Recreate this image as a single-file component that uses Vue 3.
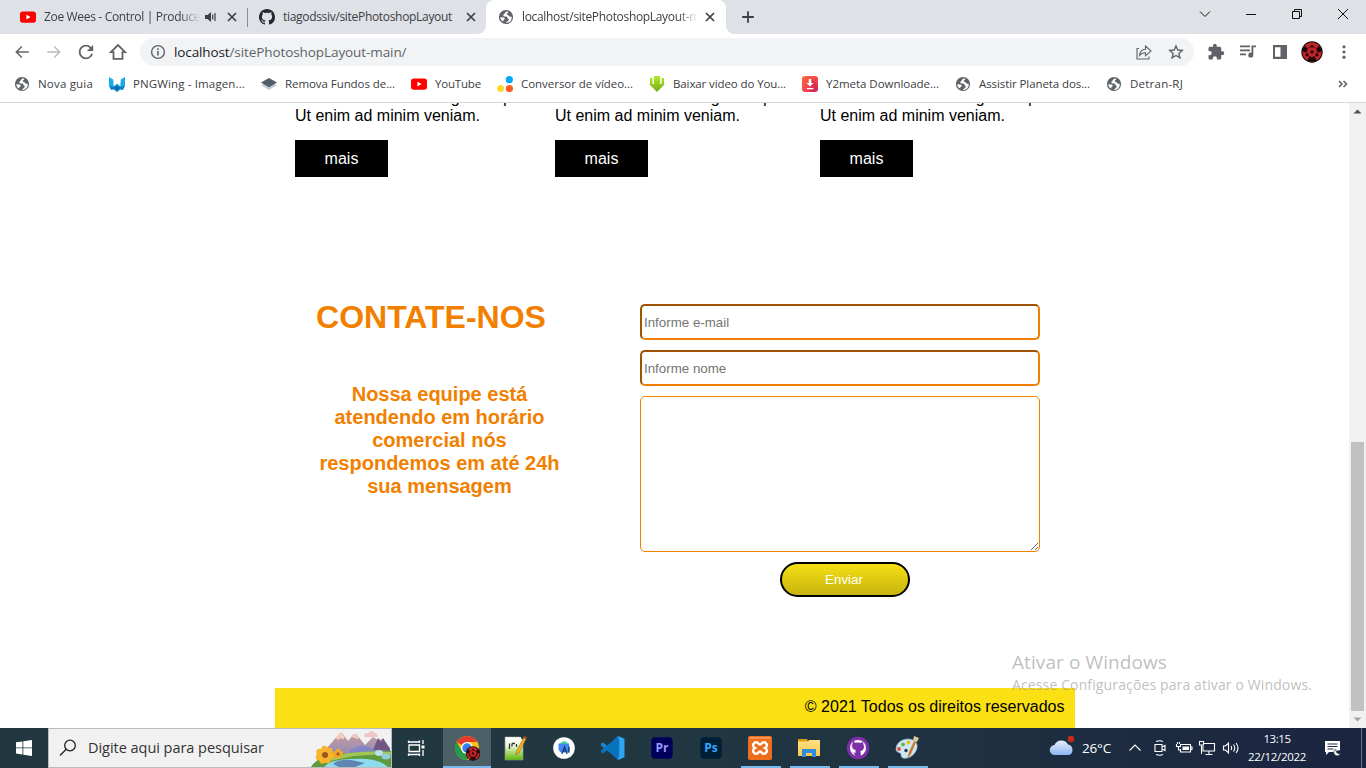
<script setup>
// Spreads letters so that a label takes exactly the given width in pixels.
const vFit = {
  mounted(el, { value }) {
    const natural = el.getBoundingClientRect().width
    el.style.letterSpacing = (value - natural) / el.textContent.length + 'px'
  },
}

const bookmarks = [
  { icon: 'globe', label: 'Nova guia', w: 55 },
  { icon: 'wing', label: 'PNGWing - Imagen...', w: 112 },
  { icon: 'layers', label: 'Remova Fundos de...', w: 110 },
  { icon: 'youtube', label: 'YouTube', w: 46 },
  { icon: 'dots', label: 'Conversor de vídeo...', w: 112 },
  { icon: 'down', label: 'Baixar video do You...', w: 113 },
  { icon: 'y2', label: 'Y2meta Downloade...', w: 113 },
  { icon: 'globe', label: 'Assistir Planeta dos...', w: 111 },
  { icon: 'globe', label: 'Detran-RJ', w: 53 },
]
const apps = [
  { icon: 'chrome', state: 'active' },
  { icon: 'notepad' },
  { icon: 'android' },
  { icon: 'vscode' },
  { icon: 'premiere' },
  { icon: 'photoshop' },
  { icon: 'xampp', state: 'open' },
  { icon: 'folder', state: 'open' },
  { icon: 'ghdesktop', state: 'open' },
  { icon: 'paint', state: 'open' },
]
</script>

<template>
  <div class="screen">
    <svg class="defs" width="0" height="0" aria-hidden="true">
      <defs>
        <linearGradient id="gDown" x1="0" y1="0" x2="0" y2="1"><stop offset="0" stop-color="#b9e62e" /><stop offset="1" stop-color="#6fae12" /></linearGradient>
        <linearGradient id="gY2" x1="0" y1="0" x2="1" y2="1"><stop offset="0" stop-color="#ff6a3d" /><stop offset="1" stop-color="#e8245f" /></linearGradient>
        <linearGradient id="gMount" x1="0" y1="0" x2="0" y2="1"><stop offset="0" stop-color="#c99da0" /><stop offset="1" stop-color="#8f8bb8" /></linearGradient>
        <linearGradient id="gCloud" x1="0" y1="0" x2="0" y2="1"><stop offset="0" stop-color="#e6effc" /><stop offset="1" stop-color="#8db5f2" /></linearGradient>
        <linearGradient id="gNote" x1="0" y1="0" x2="0" y2="1"><stop offset="0" stop-color="#ffffff" /><stop offset=".35" stop-color="#f3fbe4" /><stop offset="1" stop-color="#5cb800" /></linearGradient>
        <linearGradient id="gFolder" x1="0" y1="0" x2="0" y2="1"><stop offset="0" stop-color="#ffe083" /><stop offset="1" stop-color="#fbcb4b" /></linearGradient>
      </defs>
      <symbol id="globe" viewBox="0 0 16 16">
        <circle cx="8" cy="8" r="7.1" fill="#5f6368" />
        <path d="M8.300 2.600C6.700 3.400 7.300 4.600 6 5.300 4.700 6 5.200 7.600 6.800 7.500c1.400-.1 2.300-.1 2.500 1 .2 1 .9 1 1.300 1.600.5.900-.3 1.600-1.400 2.300-.6.400-1 .8-1.300 1.500C10 14 12.200 13 13.200 11c.6-1.200.6-2.400.4-3.300-1-.1-1.800.1-2.400-.5-.7-.6-.2-1.200-1.300-1.300-1.200-.1-1.400-.9-.7-1.600.5-.5 1.200-.6 1.200-1.200-.6-.4-1.400-.5-2.100-.5z" fill="#fff" />
        <path d="M2.300 8.200c1.200 0 2.800-.1 4 .8.800.7.500 1.600-.4 1.800-.6.100-.7.900-.6 1.800C3.500 11.900 2.400 10.300 2.300 8.200z" fill="#fff" />
      </symbol>
      <symbol id="wing" viewBox="0 0 16 16">
        <path d="M0 1l4.200 2.500.5 7L8 7.500l3.300 3 .5-7L16 1v9.500L12.500 13 8 10.500 3.500 13 0 10.500z" fill="#19ade4" />
        <path d="M.3 10 4 10.800 8 9l4 1.800 3.700-.8-1.700 4-3-.5L8 16l-3-2.500-3 .5z" fill="#0b7fca" />
        <path d="M6.500 12.500 8 10.500l1.500 2L8 14z" fill="#075a9c" />
      </symbol>
      <symbol id="layers" viewBox="0 0 16 16">
        <path d="M0 9l8-3 8 3-8 5z" fill="#c3c9cf" />
        <path d="M0 6.500 8 2l8 4.500-8 4.700z" fill="#505d6a" />
      </symbol>
      <symbol id="youtube" viewBox="0 0 16 16">
        <rect x="0" y="2.400" width="16" height="11.400" rx="2.800" fill="#f00" /><path d="M6.400 5.700v4.800l4.200-2.400z" fill="#fff" />
      </symbol>
      <symbol id="dots" viewBox="0 0 16 16">
        <circle cx="12.300" cy="3.700" r="3.600" fill="#00a9f4" /><circle cx="3.600" cy="12.500" r="3.500" fill="#ffdb2d" /><circle cx="12.400" cy="12.500" r="3.600" fill="#ff5a26" />
      </symbol>
      <symbol id="down" viewBox="0 0 16 16">
        <path d="M1 2h2.500v6H5V0h6v8h1.500V2H15v6h1l-8 8-8-8h1z" fill="url(#gDown)" /><path d="M4.200 2v5M11.800 2v5" stroke="#e8f7c4" stroke-width=".8" />
      </symbol>
      <symbol id="y2" viewBox="0 0 16 16">
        <rect width="16" height="16" rx="3" fill="url(#gY2)" /><path d="M10 3l6 6v4l-3 3H8z" fill="#b81c48" opacity=".35" /><path d="M6.800 3h2.400v4h2.200L8 10.600 4.600 7h2.200zM4.800 12h6.600v1.300H4.800z" fill="#fff" />
      </symbol>
      <symbol id="octo" viewBox="0 0 16 16">
        <path d="M8 0C3.580 0 0 3.580 0 8c0 3.540 2.290 6.530 5.470 7.590.4.070.55-.17.55-.38 0-.19-.01-.82-.01-1.490-2.010.37-2.530-.49-2.690-.94-.09-.23-.48-.94-.82-1.130-.28-.15-.68-.52-.01-.53.63-.01 1.080.58 1.230.82.72 1.210 1.870.87 2.330.66.070-.52.28-.87.51-1.070-1.780-.2-3.640-.89-3.640-3.950 0-.87.31-1.590.82-2.150-.08-.2-.36-1.020.08-2.120 0 0 .67-.21 2.200.82.64-.18 1.320-.27 2-.27s1.360.09 2 .27c1.530-1.040 2.200-.82 2.200-.82.44 1.100.16 1.920.08 2.120.51.56.82 1.270.82 2.150 0 3.070-1.870 3.750-3.650 3.950.29.25.54.73.54 1.480 0 1.070-.01 1.930-.01 2.200 0 .21.15.46.55.38A8.010 8.010 0 0 0 16 8c0-4.420-3.580-8-8-8z" />
      </symbol>
      <symbol id="sharingan" viewBox="0 0 22 22">
        <circle cx="11" cy="11" r="10.700" fill="#160a0a" /><circle cx="11" cy="11" r="9.700" fill="#c4242c" />
        <path d="M1.400 10.500A9.600 9.600 0 0 1 4 4.500L6.500 8 4.800 11.500zM20.600 10.500A9.600 9.600 0 0 0 18 4.500L15.500 8l1.700 3.500zM6.500 19.500a9.600 9.600 0 0 0 9 0L14 16H8z" fill="#1b0708" />
        <circle cx="11" cy="11" r="5.300" fill="#c4242c" stroke="#4a0e13" stroke-width=".9" />
        <circle cx="11" cy="11" r="1.700" fill="#240709" /><circle cx="11" cy="5.200" r="1.400" fill="#240709" /><circle cx="6" cy="14" r="1.400" fill="#240709" /><circle cx="16" cy="14" r="1.400" fill="#240709" />
      </symbol>
      <symbol id="x" viewBox="0 0 16 16"><path d="M4 4l8 8M12 4l-8 8" stroke="#3c4043" stroke-width="1.700" /></symbol>

      <symbol id="chrome" viewBox="0 0 26 26">
        <circle cx="13" cy="13" r="12" fill="#fbc116" />
        <path d="M13 13 2.600 7A12 12 0 0 1 23.400 7H13z" fill="#e33b2e" />
        <path d="M2.600 7A12 12 0 0 0 13 25l5.200-9L7.800 16z" fill="#269a4b" />
        <path d="M2.600 7 8 16.500l5 2.500-3 5.600A12 12 0 0 1 2.600 7z" fill="#269a4b" />
        <circle cx="13" cy="13" r="6" fill="#fff" /><circle cx="13" cy="13" r="4.700" fill="#3580ea" />
        <use href="#sharingan" x="11.500" y="11" width="15" height="15" />
      </symbol>
      <symbol id="notepad" viewBox="0 0 26 26">
        <path d="M3 2h15l3 3v20H3z" fill="url(#gNote)" stroke="#8b948b" stroke-width=".7" />
        <path d="M4 2.500h15" stroke="#fff" stroke-dasharray="2 1.500" /><path d="M7.500 8.500v5.500M10 8.500h3M10 8.500v3M14.500 9v3" stroke="#343434" stroke-width="1.300" fill="none" />
        <path d="M22 2l2.300 1.300L17 18l-3 2 .3-3.500z" fill="#efb321" stroke="#9a641a" stroke-width=".6" /><path d="M22.300 1l2.500 1.300-1 2-2.500-1.300z" fill="#b9422e" />
      </symbol>
      <symbol id="android" viewBox="0 0 26 26">
        <circle cx="13" cy="13" r="10.800" fill="#fff" /><path d="M9 9.500a4.300 4.300 0 0 1 8-1z" fill="#3ddc84" />
        <path d="M7.500 8.500h10.500v9h-8.500l-2-3z" fill="#4285f4" /><path d="M10.800 19l2.700-7 2.700 7M12 16h3" stroke="#0c3362" stroke-width="1.100" fill="none" /><path d="M18 11.500v6" stroke="#0c3362" stroke-width="1.300" />
      </symbol>
      <symbol id="vscode" viewBox="0 0 26 26">
        <path d="M18 1 7.500 11 3 7.400 1 8.500v2L19 25l.5-6.500z" fill="#1489d2" /><path d="M18 25 7.500 15 3 18.600 1 17.500v-2L19 1l.5 6.500z" fill="#0873bd" />
        <path d="M18 1l6.500 2.800v18.400L18 25l1.200-4.500v-15z" fill="#2fa6f1" />
      </symbol>
      <symbol id="premiere" viewBox="0 0 26 26">
        <rect x="2.300" y="2.300" width="21.400" height="21.400" rx="4" fill="#00005b" /><text x="13" y="17" text-anchor="middle" class="adobe" fill="#9999ff">Pr</text>
      </symbol>
      <symbol id="photoshop" viewBox="0 0 26 26">
        <rect x="2.300" y="2.300" width="21.400" height="21.400" rx="4" fill="#001e36" /><text x="13" y="17" text-anchor="middle" class="adobe" fill="#31a8ff">Ps</text>
      </symbol>
      <symbol id="xampp" viewBox="0 0 26 26">
        <rect x="1" y="1" width="24" height="24" rx="2" fill="#ed6f1e" /><rect x="2.500" y="2" width="21" height="1.600" fill="#f79a62" />
        <path d="M10 7.500C6.500 6.500 4.500 11 8 13c-3.500 2-1.500 6.500 2 5.500 1.500-.4 1.500-2 3-2s1.500 1.600 3 2c3.500 1 5.500-3.500 2-5.500 3.500-2 1.500-6.500-2-5.500-1.500.4-1.500 2-3 2s-1.500-1.600-3-2z" fill="none" stroke="#fff" stroke-width="2.500" />
      </symbol>
      <symbol id="folder" viewBox="0 0 26 26">
        <path d="M2 4h9l1 2h12v15H2z" fill="#dc9c10" /><path d="M2 6.500h10l1-1.500h11v16H2z" fill="url(#gFolder)" />
        <path d="M6 14h14v8h-4v-4h-6v4H6z" fill="#2f8de0" />
      </symbol>
      <symbol id="ghdesktop" viewBox="0 0 26 26">
        <circle cx="13" cy="13" r="11.200" fill="#7e2fa5" /><circle cx="13" cy="13" r="8" fill="#fff" />
        <path d="M10.700 21v-3c-1.700.3-2.500-.5-3-1.500M15.500 21v-3.500c0-.7-.3-1.200-.6-1.500 3-.4 4-1.800 4-4.500 0-1-.3-1.700-.8-2.300l-.1-2c-.8 0-1.500.4-2.200.9a9 9 0 0 0-5.600 0C9.500 6.600 8.800 6.200 8 6.200l-.1 2c-.5.7-.8 1.400-.8 2.300 0 2.800 1.200 4.200 4 4.500-.3.500-.5 1-.4 1.500V21z" fill="#7e2fa5" stroke="#7e2fa5" stroke-width=".4" />
      </symbol>
      <symbol id="paint" viewBox="0 0 26 26">
        <path d="M2 14C2 8 8 4 14 4s10 3.500 9 9-8 12-14 10c-3-1-1-4-3-5s-4-1-4-4z" fill="#cfe7f2" stroke="#86b2c8" stroke-width=".7" />
        <circle cx="5" cy="14" r="1.900" fill="#e9463a" /><circle cx="9" cy="9.500" r="1.900" fill="#68b84a" /><circle cx="14.500" cy="7.500" r="1.900" fill="#f2bd25" /><circle cx="12" cy="15.500" r="1.700" fill="#24374a" />
        <path d="M20 6 15 17l-2 7 4-5 5-12z" fill="#c9792a" /><path d="M20 1l5 2-2 4-4-1z" fill="#e6c79a" />
      </symbol>
    </svg>

    <header class="tabs">
      <div class="tab t1">
        <svg class="fav"><use href="#youtube" /></svg>
        <div class="clip c1"><span v-fit="156">Zoe Wees - Control | Produce</span></div>
        <svg class="speaker" viewBox="0 0 12 12"><path d="M0 4h2.500L6 1v10L2.500 8H0z" fill="#3c4043" /><path d="M7.700 3.500v5M10 2v8" stroke="#3c4043" stroke-width="1.200" /></svg>
        <svg class="close"><use href="#x" /></svg>
      </div>
      <div class="tab t2">
        <svg class="fav"><use href="#octo" fill="#24292f" /></svg>
        <div class="clip c2"><span v-fit="169">tiagodssiv/sitePhotoshopLayout</span></div>
        <svg class="close"><use href="#x" /></svg>
      </div>
      <div class="tab t3">
        <svg class="fav"><use href="#globe" /></svg>
        <div class="clip c3"><span v-fit="178">localhost/sitePhotoshopLayout-m</span></div>
        <svg class="close"><use href="#x" /></svg>
      </div>
      <svg class="plus" viewBox="0 0 14 14"><path d="M7 1.200v11.600M1.200 7h11.600" stroke="#3c4043" stroke-width="1.800" /></svg>
      <div class="winctl">
        <svg viewBox="0 0 46 34"><path d="M18 11.500l5 5 5-5" /></svg>
        <svg viewBox="0 0 46 34"><path d="M18 14.500h10" /></svg>
        <svg viewBox="0 0 46 34"><path d="M18.500 11.500h7v7h-7zM20.500 11.500v-2h7v7h-2" /></svg>
        <svg viewBox="0 0 46 34"><path d="M18 9l10 10M28 9l-10 10" /></svg>
      </div>
    </header>

    <div class="toolbar">
      <svg viewBox="0 0 24 24" class="nav"><path d="M21 11H6.800l5.600-5.600L11 4l-8 8 8 8 1.400-1.400L6.800 13H21z" /></svg>
      <svg viewBox="0 0 24 24" class="nav dim"><path d="M3 11h14.200l-5.600-5.600L13 4l8 8-8 8-1.400-1.400 5.600-5.600H3z" /></svg>
      <svg viewBox="2 2 20 20" class="nav"><path d="M17.650 6.350A7.958 7.958 0 0 0 12 4c-4.420 0-7.990 3.580-7.990 8s3.570 8 7.990 8c3.730 0 6.840-2.550 7.730-6h-2.080A5.990 5.990 0 0 1 12 18c-3.310 0-6-2.690-6-6s2.690-6 6-6c1.660 0 3.140.69 4.220 1.780L13 11h7V4z" /></svg>
      <svg viewBox="0 0 18 18" class="nav"><path d="M1.800 9.200 9 2l7.200 7.200h-2.700v6.700h-9V9.200z" fill="none" stroke="#5f6368" stroke-width="1.800" /></svg>
      <div class="omni">
        <svg viewBox="0 0 16 16" class="info"><circle cx="8" cy="8" r="6.400" fill="none" stroke="#5f6368" stroke-width="1.400" /><path d="M7.200 7h1.600v4.500H7.200zM7.200 4.300h1.600v1.600H7.200z" fill="#5f6368" /></svg>
        <span class="host" v-fit="55.500">localhost</span><span class="path" v-fit="177">/sitePhotoshopLayout-main/</span>
        <svg viewBox="0 0 18 18" class="share"><path d="M4 5.500H2V16h12v-2.500M4.500 12.500c.3-3.800 2.500-6 6-6.300V3l5.500 5-5.500 4.800V9.700c-2.800 0-4.500.8-6 2.800z" /></svg>
        <svg viewBox="0 0 18 18" class="star"><path d="M9 3l1.800 4 4.400.4-3.300 3 1 4.400L9 12.500l-3.900 2.300 1-4.400-3.300-3 4.400-.4z" /></svg>
      </div>
      <svg viewBox="0 0 24 24" class="ext"><path d="M20.500 11H19V7c0-1.100-.9-2-2-2h-4V3.500a2.500 2.500 0 0 0-5 0V5H4c-1.100 0-1.990.9-1.990 2v3.800H3.500c1.490 0 2.700 1.210 2.700 2.700s-1.210 2.700-2.700 2.700H2V20c0 1.100.9 2 2 2h3.800v-1.500c0-1.490 1.210-2.700 2.700-2.700s2.700 1.210 2.700 2.700V22H17c1.100 0 2-.9 2-2v-4h1.500a2.500 2.500 0 0 0 0-5z" /></svg>
      <svg viewBox="0 0 18 18" class="ext"><path d="M1 2.500h10v1.700H1zM1 6.500h10v1.700H1zM1 10.500h6v1.700H1zM12.500 2.500H17v1.800h-2.700V12a2.500 2.500 0 1 1-1.800-2.300z" /></svg>
      <svg viewBox="0 0 18 18" class="ext"><path d="M2 2h14v14H2zM4 4.200v9.600h5.500V4.200z" fill-rule="evenodd" /></svg>
      <svg class="avatar"><use href="#sharingan" /></svg>
      <svg viewBox="0 0 18 18" class="ext"><circle cx="9" cy="3.800" r="1.600" /><circle cx="9" cy="9" r="1.600" /><circle cx="9" cy="14.200" r="1.600" /></svg>
    </div>

    <nav class="bookmarks">
      <div v-for="b in bookmarks" :key="b.label" class="bm">
        <svg class="fav"><use :href="'#' + b.icon" /></svg>
        <div class="bmtext" :style="{ width: b.w + 'px' }"><span v-fit="b.w">{{ b.label }}</span></div>
      </div>
      <svg class="more" viewBox="0 0 10 10"><path d="M1 2l3 3-3 3M5.500 2l3 3-3 3" fill="none" stroke="#5f6368" stroke-width="1.600" /></svg>
    </nav>

    <div class="viewport">
      <main class="page">
        <section class="cards">
          <article v-for="n in 3" :key="n" class="card">
            <p>ut labore et dolore magna aliqua.<br />Ut enim ad minim veniam.</p>
            <a class="mais">mais</a>
          </article>
        </section>
        <section class="contact">
          <div class="intro">
            <h1>CONTATE-NOS</h1>
            <h3>Nossa equipe está<br />atendendo em horário<br />comercial nós<br />respondemos em até 24h<br />sua mensagem</h3>
          </div>
          <form class="form" @submit.prevent>
            <input type="email" placeholder="Informe e-mail" />
            <input type="text" placeholder="Informe nome" />
            <textarea></textarea>
            <button type="submit">Enviar</button>
          </form>
        </section>
        <footer>© 2021 Todos os direitos reservados</footer>
      </main>
      <div class="scroll">
        <svg viewBox="0 0 17 17"><path d="M8.500 6.500l4 4h-8z" fill="#505050" /></svg>
        <div class="thumb"></div>
        <svg viewBox="0 0 17 17"><path d="M8.500 10.500l4-4h-8z" fill="#a3a3a3" /></svg>
      </div>
    </div>

    <div class="watermark">
      <div class="w1"><span v-fit="155">Ativar o Windows</span></div>
      <div class="w2"><span v-fit="300">Acesse Configurações para ativar o Windows.</span></div>
    </div>

    <div class="taskbar">
      <div class="start"><svg viewBox="0 0 16 16"><path d="M0 2.300l6.500-.9v6.100H0zM7.300 1.300 16 0v7.500H7.300zM0 8.300h6.500v6.200L0 13.600zM7.300 8.300H16V16l-8.700-1.300z" fill="#fff" /></svg></div>
      <div class="search">
        <svg class="lens" viewBox="0 0 18 18"><circle cx="11" cy="6.500" r="5.300" /><path d="M7.200 10.300 1 16.500" /></svg>
        <div class="hint"><span v-fit="176">Digite aqui para pesquisar</span></div>
        <svg class="art" viewBox="0 0 80 38">
          <path d="M10 26 28 5q2-3 4 0l5 7 5-6q2-2 4 0l8 10 8-8 5 3 5-1 7 9v8H10z" fill="url(#gMount)" />
          <path d="M24.500 9l4-4.500q1.500-1.500 3 0l2.500 4-2 2-2.500-1.500-2.500 2zM40.500 8l2-2q1.500-1.500 3 0l2.500 3-2 1-2-1z" fill="#f3cdc2" /><path d="M62 21l5-12 3 4 2-4 7 11v2z" fill="#6f5780" /><path d="M35 26q15-17 30-3v3z" fill="#7b83cf" opacity=".85" />
          <path d="M53 7q0-3 4-3 3-4 7 0 3 0 2 4H54z" fill="#ecc6c8" />
          <path d="M0 38q4-8 20-12 30-4 60-4v16z" fill="#5f9a3c" /><path d="M16 28q30-7 64-5v3q-30-2-60 6z" fill="#a3c557" />
          <path d="M13 38q5-7 26-8 28-2 38 8z" fill="#8edcf0" /><path d="M22 35q6-5 18-4l14 3-10 4H28z" fill="#5f86b0" /><ellipse cx="68" cy="24" rx="4" ry="3" fill="#b4e3ee" /><ellipse cx="75" cy="27.500" rx="4.500" ry="3" fill="#93cddd" />
          <g fill="#f8b42b"><circle cx="13.500" cy="20" r="3.200" /><circle cx="18.500" cy="22" r="3.200" /><circle cx="20" cy="26.500" r="3.200" /><circle cx="16.500" cy="31" r="3.200" /><circle cx="11.500" cy="31.500" r="3.200" /><circle cx="8" cy="28" r="3.200" /><circle cx="8.500" cy="23" r="3.200" /></g><circle cx="14" cy="26" r="3" fill="#a55717" />
          <g fill="#f5a623"><circle cx="27" cy="21.500" r="2.100" /><circle cx="30" cy="24" r="2.100" /><circle cx="28.500" cy="27.500" r="2.100" /><circle cx="24.800" cy="27.500" r="2.100" /><circle cx="24" cy="24" r="2.100" /></g><circle cx="27" cy="25" r="1.500" fill="#a55717" />
        </svg>
      </div>
      <div class="taskview"><svg viewBox="0 0 18 18" fill="none" stroke="#fff" stroke-width="1.300"><path d="M1.500 4V1.500M1.500 3h11M12.500 4V1.500M2 6h10.500v6.500H2zM1.500 17v-2.500M1.500 15.500h11M12.500 17v-2.500M16 1v4M16 11v6" /><path d="M14.500 6.500h3v3h-3z" fill="#fff" stroke="none" /></svg></div>
      <div v-for="a in apps" :key="a.icon" class="app" :class="a.state"><svg><use :href="'#' + a.icon" /></svg></div>
      <div class="tray">
        <svg class="cloud" viewBox="0 0 26 22"><path d="M6 20a5 5 0 0 1-.5-10A7.500 7.500 0 0 1 19 9.500 5.500 5.500 0 0 1 20 20z" fill="url(#gCloud)" /><circle cx="22" cy="4" r="3.200" fill="#c42b1c" /></svg>
        <div class="temp"><span v-fit="29">26°C</span></div>
        <svg class="up" viewBox="0 0 14 14"><path d="M1.500 9.500 7 4l5.500 5.500" /></svg>
        <svg class="meet" viewBox="0 0 16 18"><path d="M3 5.500h7v7H3zM10 8l3-1.500v5L10 10M4 2.500q4-1.500 7 0M4 15.500q4 1.500 7 0" /></svg>
        <svg class="batt" viewBox="0 0 18 14"><path d="M6 3.500h9.500v7.500H5.500V8M15.500 6h1.500v2.500h-1.500M1.500 3v2.500h4V3M2.500 3V1M4.500 3V1M3.500 5.500V9h2" /><path d="M7.500 5.500h6.500v3.500H7.500z" fill="#fff" stroke="none" /></svg>
        <svg class="net" viewBox="0 0 18 16"><path d="M6 3.500h10.500v7.500H5V6M11 11v3M7.500 14.500h7M1.500 1.500h4v3.500h-4zM3.500 5v9" /></svg>
        <svg class="vol" viewBox="0 0 18 14"><path d="M1.500 5h2L6.500 2v10L3.500 9h-2zM9 5q1.300 2 0 4M11.500 3.500q2.500 3.500 0 7M14 2q4 5 0 10" /></svg>
        <div class="clock">
          <div><span v-fit="27">13:15</span></div>
          <div><span v-fit="58">22/12/2022</span></div>
        </div>
        <svg class="action" viewBox="0 0 17 17"><path d="M1 1h15v9.500a4 4 0 0 0-4.500 1.500H5l-3 3v-3H1z" fill="#fff" /><path d="M3.500 4h10M3.500 6.500h10M3.500 9h6" stroke="#1c2a44" stroke-width="1.100" /><path d="M12 9a3.500 3.500 0 1 0 4.500 4.500A3.500 3.500 0 0 1 12 9z" fill="#fff" stroke="#1c2a44" stroke-width=".6" /></svg>
        <div class="peek"></div>
      </div>
    </div>
  </div>
</template>

<style>
body { background: #fff; overflow: hidden; }
</style>

<style scoped>
.screen { position: relative; width: 1366px; height: 768px; overflow: hidden; display: flex; flex-direction: column; background: #fff; font-family: "Open Sans", "Noto Sans", sans-serif; font-size: 12px; color: #3c4043; }
.screen * { box-sizing: border-box; }
.defs { position: absolute; }
svg { display: block; flex: none; }
span { display: inline-block; white-space: pre; flex: none; }
.fav { width: 16px; height: 16px; }
.adobe { font: bold 12px "Open Sans", sans-serif; }

.tabs { height: 34px; flex: none; display: flex; background: #dee1e6; }
.tab { height: 34px; display: flex; align-items: center; }
.clip { overflow: hidden; line-height: 20px; margin-left: 8px; mask-image: linear-gradient(to right, #000 calc(100% - 20px), transparent); }
.t1 { width: 247px; padding-left: 20px; }
.c1 { width: 156px; }
.speaker { width: 12px; height: 12px; margin-left: 5px; }
.close { width: 16px; height: 16px; }
.t1 .close { margin-left: 7px; }
.t2 { width: 239px; padding-left: 12px; position: relative; }
.t2::before { content: ""; position: absolute; left: 0; top: 8px; width: 1px; height: 19px; background: #8a8d91; }
.c2 { width: 172px; mask-image: none; }
.t2 .close { margin-left: 8px; }
.t3 { width: 240px; padding-left: 12px; background: #fff; border-radius: 8px 8px 0 0; position: relative; }
.t3::before, .t3::after { content: ""; position: absolute; bottom: 0; width: 8px; height: 8px; }
.t3::before { left: -8px; background: radial-gradient(circle at 0 0, #dee1e6 7.500px, #fff 8px); }
.t3::after { right: -8px; background: radial-gradient(circle at 100% 0, #dee1e6 7.500px, #fff 8px); }
.c3 { width: 176px; }
.t3 .close { margin-left: 4px; }
.plus { width: 14px; height: 14px; margin: 10px 0 0 15px; }
.winctl { margin-left: auto; display: flex; }
.winctl svg { width: 46px; height: 34px; fill: none; stroke: #111; stroke-width: 1; }

.toolbar { height: 36px; flex: none; display: flex; align-items: center; padding-left: 13px; background: #fff; }
.nav { width: 18px; height: 18px; margin-right: 14px; fill: #5f6368; }
.dim { fill: #babcbe; }
.omni { width: 1054px; height: 28px; margin-left: -1px; border-radius: 14px; background: #f1f3f4; display: flex; align-items: center; padding-left: 10px; font-size: 13.500px; line-height: 20px; }
.info { width: 16px; height: 16px; margin-right: 8px; }
.host { color: #202124; }
.path { color: #5f6368; }
.share { width: 18px; height: 18px; margin-left: auto; fill: none; stroke: #5f6368; stroke-width: 1.100; }
.star { width: 18px; height: 18px; margin: 0 9px 0 14px; fill: none; stroke: #5f6368; stroke-width: 1.400; }
.ext { width: 18px; height: 18px; margin: 0 7px; fill: #5f6368; }
.omni + .ext { margin-left: 13px; }
.avatar { width: 22px; height: 22px; margin: 0 5px; }

.bookmarks { height: 33px; flex: none; display: flex; align-items: center; gap: 16px; padding: 0 18px 4px 14px; border-bottom: 1px solid #d5d7da; font-size: 11.500px; }
.bm { display: flex; align-items: center; gap: 8px; flex: none; }
.bmtext { line-height: 18px; }
.more { width: 10px; height: 10px; margin-left: auto; }

.viewport { height: 625px; flex: none; display: flex; justify-content: space-between; font-family: "Liberation Sans", Arial, sans-serif; font-size: 16px; color: #000; }
.page { width: 800px; margin-left: 275px; height: 625px; overflow: hidden; display: flex; flex-direction: column; }
.cards { height: 200px; flex: none; display: grid; grid-template-columns: 260px 265px 255px; padding-left: 20px; margin-top: -14px; }
.card p { margin: 0 0 15px; line-height: 18px; white-space: nowrap; }
.mais { display: block; width: 93px; height: 37px; line-height: 37px; text-align: center; background: #000; color: #fff; }
.contact { display: flex; height: 397px; }
.intro { width: 290px; margin-left: 20px; color: #f28000; text-align: center; }
h1 { margin: 10px 18px 0 0; font-size: 32px; line-height: 37px; }
h3 { margin: 47px 0 0; font-size: 20px; line-height: 23px; padding-right: 1px; }
.form { width: 400px; margin-left: 55px; padding-top: 15px; display: flex; flex-direction: column; gap: 10px; }
.form input { width: 400px; height: 36px; border: 2px inset #f28000; border-radius: 5px; padding: 1px 2px; font: 13.333px "Liberation Sans", Arial, sans-serif; background: #fff; outline: none; }
.form input::placeholder { color: #757575; }
.form textarea { display: block; width: 400px; height: 156px; border: 1px solid #f28000; border-radius: 5px; background: #fff; resize: both; }
.form button { width: 130px; height: 35px; margin-left: 140px; padding: 0 2px 0 0; border: 2px solid #000; border-radius: 18px; color: #fff; font: 13.333px "Liberation Sans", Arial, sans-serif; background: linear-gradient(#f5df14, #c8b40f); }
footer { height: 40px; margin-top: auto; background: #fbe014; text-align: right; padding: 10px 10.500px 0 0; line-height: 18px; flex: none; }
.scroll { width: 17px; background: #f1f1f1; display: flex; flex-direction: column; }
.scroll svg { width: 17px; height: 17px; }
.thumb { width: 13px; height: 269px; margin: auto 2px 0; background: #c1c1c1; }

.watermark { position: absolute; left: 1012px; top: 650px; color: rgba(150, 150, 150, .62); }
.w1 { font-size: 19px; line-height: 24px; }
.w2 { font-size: 14px; line-height: 22px; }

.taskbar { height: 40px; flex: none; display: flex; background: linear-gradient(90deg, #213840 0%, #213841 45%, #1e3041 72%, #1a2440 100%); color: #fff; }
.start { width: 48px; display: flex; align-items: center; justify-content: center; }
.start svg { width: 16px; height: 16px; }
.search { width: 344px; height: 40px; background: #f1f1f1; border: 1px solid #b9bcbc; display: flex; align-items: center; padding-left: 10px; color: #333; font-size: 14.500px; line-height: 20px; }
.lens { width: 18px; height: 18px; fill: none; stroke: #222; stroke-width: 1.300; }
.hint { margin-left: 11px; width: 176px; }
.art { width: 80px; height: 38px; margin-left: auto; }
.taskview { width: 51px; display: flex; align-items: center; padding-left: 15px; }
.taskview svg { width: 18px; height: 18px; }
.app { width: 49px; height: 40px; display: flex; align-items: center; padding-left: 10px; position: relative; flex: none; }
.app svg { width: 26px; height: 26px; }
.active { width: 48px; margin-right: 1px; padding-left: 11px; background: #4c6067; }
.active::after, .open::after { content: ""; position: absolute; left: 4px; bottom: 0; width: 40px; height: 2px; background: #76b9ed; }
.active::after { left: 0; width: 48px; }
.tray { margin-left: auto; display: flex; align-items: center; width: 317px; }
.tray svg { fill: none; stroke: #fff; stroke-width: 1.100; }
.tray .cloud { width: 26px; height: 22px; margin-top: -4px; stroke: none; }
.tray .action { stroke: none; }
.temp { width: 29px; margin-left: 7px; font-size: 13.500px; line-height: 20px; }
.up { width: 14px; height: 14px; margin-left: 17px; }
.meet { width: 16px; height: 18px; margin-left: 10px; }
.batt { width: 18px; height: 14px; margin-left: 7px; }
.net { width: 18px; height: 16px; margin-left: 5px; }
.vol { width: 18px; height: 14px; margin-left: 6px; }
.clock { width: 60px; margin-left: 7px; text-align: center; font-size: 11.500px; line-height: 18px; }
.action { width: 17px; height: 17px; margin-left: 17px; }
.peek { width: 1px; height: 40px; background: #66708a; margin: 0 4px 0 auto; }
</style>
